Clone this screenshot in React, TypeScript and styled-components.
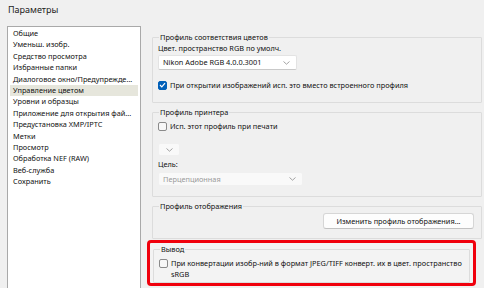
import React from "react";
import styled, { createGlobalStyle } from "styled-components";

const GlobalStyle = createGlobalStyle`
  html, body {
    margin: 0;
    padding: 0;
    background: #f0f0f0;
  }
  body {
    font-family: "Noto Sans", "Open Sans", sans-serif;
    color: #111;
  }
`;

// ------------ ESTILOS ------------
const Window = styled.div`
  width: 484px;
  height: 288px;
  overflow: hidden;
  background: #f0f0f0;
  display: flex;
  flex-direction: column;
`;

const TitleBar = styled.div`
  height: 22px;
  padding-left: 8px;
  font-size: 9px;
  line-height: 20px;
  color: #1c1c1c;
`;

const Body = styled.div`
  display: flex;
  padding: 6px 0 0 7px;
  gap: 11px;
`;

const Sidebar = styled.ul`
  list-style: none;
  margin: 0;
  width: 130px;
  height: 300px;
  padding: 1px 1px 0;
  background: #ffffff;
  border: 1px solid #a9a9a9;
  box-sizing: content-box;
`;

const NavItem = styled.li<{ $active?: boolean }>`
  margin: 0 1px;
  padding-left: 3px;
  height: 11.4px;
  font-size: 7.35px;
  line-height: 11.4px;
  white-space: nowrap;
  overflow: hidden;
  background: ${(p) => (p.$active ? "#e6e6dc" : "transparent")};
`;

const Content = styled.div`
  width: 330px;
  display: flex;
  flex-direction: column;
  padding-top: 5.5px;
  font-size: 7.35px;
`;

const Group = styled.fieldset<{ $gap?: number; $bottom?: number }>`
  margin: 0 0 ${(p) => p.$gap ?? 4}px;
  padding: 0 5px ${(p) => p.$bottom ?? 9}px;
  border: 1px solid #dcdcdc;
  border-radius: 1px;
  min-width: 0;
`;

const Legend = styled.legend`
  padding: 0 1px;
  margin-left: 1px;
  line-height: 11px;
  font-size: 7.35px;
`;

const Label = styled.div<{ $top?: number }>`
  line-height: 11px;
  margin-top: ${(p) => p.$top ?? 0}px;
`;

const Select = styled.div<{ $w: number; $h?: number; $top?: number; $disabled?: boolean }>`
  width: ${(p) => p.$w}px;
  height: ${(p) => p.$h ?? 15}px;
  box-sizing: border-box;
  margin-top: ${(p) => p.$top ?? 1.5}px;
  padding: 0 6px 0 4px;
  display: flex;
  align-items: center;
  justify-content: space-between;
  background: ${(p) => (p.$disabled ? "#f9f9f9" : "#ffffff")};
  border: 1px solid ${(p) => (p.$disabled ? "#f0f0f0" : "#e3e3e3")};
  border-bottom-color: ${(p) => (p.$disabled ? "#f0f0f0" : "#c9c9c9")};
  border-radius: 2px;
  color: ${(p) => (p.$disabled ? "#9a9a9a" : "#111")};
  line-height: 11px;
`;

const CheckRow = styled.label<{ $top: number }>`
  display: flex;
  align-items: flex-start;
  gap: 3px;
  margin-top: ${(p) => p.$top}px;
  line-height: 11px;
`;

const Box = styled.span<{ $checked?: boolean }>`
  flex: none;
  width: 9px;
  height: 9px;
  margin-top: 1px;
  box-sizing: border-box;
  border-radius: 2px;
  border: 1px solid ${(p) => (p.$checked ? "#005fb8" : "#8a8a8a")};
  background: ${(p) => (p.$checked ? "#005fb8" : "#f7f7f7")};
  display: flex;
  align-items: center;
  justify-content: center;
`;

const ButtonRow = styled.div`
  display: flex;
  justify-content: flex-end;
  margin-top: 1px;
  padding-right: 2px;
`;

const Button = styled.button`
  width: 151px;
  height: 16px;
  padding: 0;
  font-family: inherit;
  font-size: 7.35px;
  color: #111;
  background: #fdfdfd;
  border: 1px solid #d6d6d6;
  border-bottom-color: #c2c2c2;
  border-radius: 3px;
`;

const Highlight = styled.div`
  margin: 0 6px 0 -5px;
  padding: 1px 3px 0;
  border: 3px solid #f0000c;
  border-radius: 4px;
  background: #f3f3f3;
`;

const Chevron = () => (
  <svg width="7" height="4" viewBox="0 0 7 4">
    <path d="M0.5 0.5 L3.5 3.2 L6.5 0.5" fill="none" stroke="#8c8c8c" strokeWidth="0.8" />
  </svg>
);

const Check = () => (
  <svg width="7" height="6" viewBox="0 0 7 6">
    <path d="M1 3 L2.8 4.8 L6 1.2" fill="none" stroke="#fff" strokeWidth="1.2" />
  </svg>
);

const nav = [
  "Общие",
  "Уменьш. изобр.",
  "Средство просмотра",
  "Избранные папки",
  "Диалоговое окно/Предупрежде...",
  "Управление цветом",
  "Уровни и образцы",
  "Приложение для открытия фай...",
  "Предустановка XMP/IPTC",
  "Метки",
  "Просмотр",
  "Обработка NEF (RAW)",
  "Веб-служба",
  "Сохранить",
];

// ------------ COMPONENTE ------------
export default function App() {
  return (
    <>
      <GlobalStyle />
      <Window>
        <TitleBar>Параметры</TitleBar>
        <Body>
          <Sidebar>
            {nav.map((n) => (
              <NavItem key={n} $active={n === "Управление цветом"}>
                {n}
              </NavItem>
            ))}
          </Sidebar>
          <Content>
            <Group $gap={4.5} $bottom={11}>
              <Legend>Профиль соответствия цветов</Legend>
              <Label>Цвет. пространство RGB по умолч.</Label>
              <Select $w={139}>
                <span>Nikon Adobe RGB 4.0.0.3001</span>
                <Chevron />
              </Select>
              <CheckRow $top={9.5}>
                <Box $checked>
                  <Check />
                </Box>
                При открытии изображений исп. это вместо встроенного профиля
              </CheckRow>
            </Group>

            <Group $gap={3.5} $bottom={10}>
              <Legend>Профиль принтера</Legend>
              <CheckRow $top={3}>
                <Box />
                Исп. этот профиль при печати
              </CheckRow>
              <Select $w={22} $h={13} $top={11} $disabled>
                <span />
                <Chevron />
              </Select>
              <Label $top={3}>Цель:</Label>
              <Select $w={145} $h={14} $top={2} $disabled>
                <span>Перцепционная</span>
                <Chevron />
              </Select>
            </Group>

            <Group $gap={1.5}>
              <Legend>Профиль отображения</Legend>
              <ButtonRow>
                <Button>Изменить профиль отображения...</Button>
              </ButtonRow>
            </Group>

            <Highlight>
              <Group $gap={0} $bottom={2}>
                <Legend>Вывод</Legend>
                <CheckRow $top={2.5}>
                  <Box />
                  <span>
                    При конвертации изобр-ний в формат JPEG/TIFF конверт. их в цвет. пространство
                    sRGB
                  </span>
                </CheckRow>
              </Group>
            </Highlight>
          </Content>
        </Body>
      </Window>
    </>
  );
}
